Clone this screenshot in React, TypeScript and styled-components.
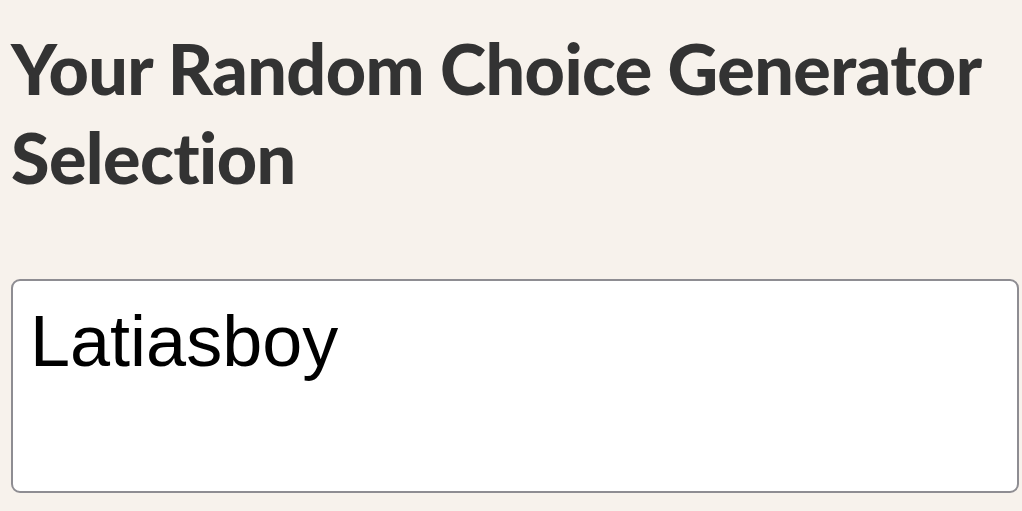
import React from "react";
import styled, { createGlobalStyle } from "styled-components";

const GlobalStyle = createGlobalStyle`
  html, body {
    margin: 0;
    padding: 0;
    background: #f7f2ec;
  }
`;

const Page = styled.main`
  display: flex;
  flex-direction: column;
  padding: 24px 3px 0 11px;
  box-sizing: border-box;
  width: 1022px;
`;

const Title = styled.h1`
  margin: 0;
  font-family: "Lato", "Noto Sans", sans-serif;
  font-weight: 900;
  font-size: 70px;
  line-height: 89px;
  letter-spacing: -0.6px;
  color: #333333;
`;

const Field = styled.div`
  margin-top: 77px;
  box-sizing: border-box;
  width: 1008px;
  height: 214px;
  border: 2px solid #8e8d92;
  border-radius: 9px;
  background: #ffffff;
  padding: 19px 17px;
`;

const FieldText = styled.span`
  font-family: "Liberation Sans", Arial, sans-serif;
  font-size: 72px;
  line-height: normal;
  color: #000000;
`;

export default function App() {
  return (
    <>
      <GlobalStyle />
      <Page>
        <Title>Your Random Choice Generator Selection</Title>
        <Field>
          <FieldText>Latiasboy</FieldText>
        </Field>
      </Page>
    </>
  );
}
